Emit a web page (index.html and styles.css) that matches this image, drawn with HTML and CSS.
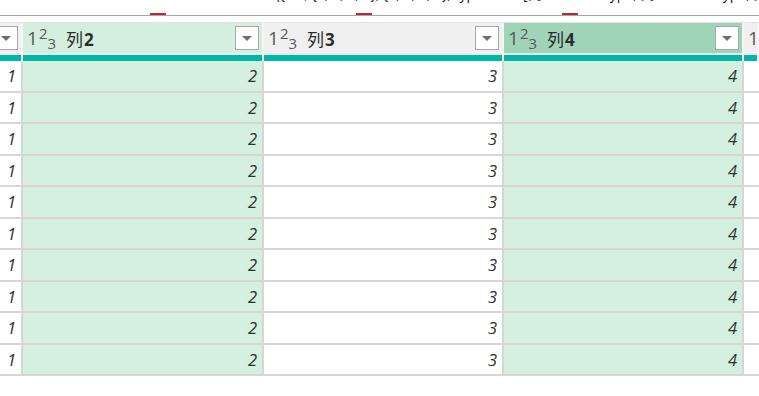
FILE: index.html
```html
<!DOCTYPE html>
<html>
<head>
    <title>查询编辑器</title>
    <link rel="stylesheet" href="styles.css">
</head>
<body>
    <div class="formula">
        <div class="code">= Table.FromRows({<span class="str">"1",</span> {1, 2, 3, 4}, {1, 2, 3, 4}, type table [<span class="str">列1</span> = Int64.Type, <span class="str">列2</span> = Int64.Type, <span class="str">列3</span>, <span class="str">列4</span>]})</div>
        <div class="marks">
            <span class="mark m1"></span>
            <span class="mark m2"></span>
            <span class="mark m3"></span>
        </div>
    </div>

    <div class="grid">
        <div class="row head">
            <div class="hcell plain"><div class="hin"><span class="drop"></span></div><div class="strip"></div></div>
            <div class="hcell mint">
                <div class="hin">
                    <span class="type">1<sup>2</sup><sub>3</sub></span>
                    <span class="name">列<b>2</b></span>
                    <span class="drop"></span>
                </div>
                <div class="strip"></div>
            </div>
            <div class="hcell plain">
                <div class="hin">
                    <span class="type">1<sup>2</sup><sub>3</sub></span>
                    <span class="name">列<b>3</b></span>
                    <span class="drop"></span>
                </div>
                <div class="strip"></div>
            </div>
            <div class="hcell picked">
                <div class="hin">
                    <span class="type">1<sup>2</sup><sub>3</sub></span>
                    <span class="name">列<b>4</b></span>
                    <span class="drop"></span>
                </div>
                <div class="strip"></div>
            </div>
            <div class="hcell plain"><div class="hin"><span class="type">1<sup>2</sup><sub>3</sub></span></div><div class="strip"></div></div>
        </div>

        <div class="row"><div class="cell">1</div><div class="cell mint">2</div><div class="cell">3</div><div class="cell mint">4</div><div class="cell"></div></div>
        <div class="row"><div class="cell">1</div><div class="cell mint">2</div><div class="cell">3</div><div class="cell mint">4</div><div class="cell"></div></div>
        <div class="row"><div class="cell">1</div><div class="cell mint">2</div><div class="cell">3</div><div class="cell mint">4</div><div class="cell"></div></div>
        <div class="row"><div class="cell">1</div><div class="cell mint">2</div><div class="cell">3</div><div class="cell mint">4</div><div class="cell"></div></div>
        <div class="row"><div class="cell">1</div><div class="cell mint">2</div><div class="cell">3</div><div class="cell mint">4</div><div class="cell"></div></div>
        <div class="row"><div class="cell">1</div><div class="cell mint">2</div><div class="cell">3</div><div class="cell mint">4</div><div class="cell"></div></div>
        <div class="row"><div class="cell">1</div><div class="cell mint">2</div><div class="cell">3</div><div class="cell mint">4</div><div class="cell"></div></div>
        <div class="row"><div class="cell">1</div><div class="cell mint">2</div><div class="cell">3</div><div class="cell mint">4</div><div class="cell"></div></div>
        <div class="row"><div class="cell">1</div><div class="cell mint">2</div><div class="cell">3</div><div class="cell mint">4</div><div class="cell"></div></div>
        <div class="row"><div class="cell">1</div><div class="cell mint">2</div><div class="cell">3</div><div class="cell mint">4</div><div class="cell"></div></div>
    </div>
</body>
</html>
```

FILE: styles.css
```css
* {
    margin: 0;
    padding: 0;
    box-sizing: border-box;
}

body {
    background: #fff;
    font-family: 'Open Sans', 'Noto Sans CJK SC', sans-serif;
    color: #333;
    overflow: hidden;
}

/* formula bar, scrolled so only the bottom of the line shows */
.formula {
    height: 16px;
    border-bottom: 1px solid #a6a6a6;
    overflow: hidden;
    margin-bottom: 6px;
}

.code {
    margin-top: -14px;
    padding-left: 156px;
    height: 16px;
    line-height: 16px;
    font-size: 14px;
    white-space: nowrap;
    color: #111;
}

.code .str {
    color: #b31515;
}

.marks {
    display: flex;
    margin-top: 11px;
    height: 2px;
}

.mark {
    display: block;
    width: 16px;
    height: 2px;
    background: #c0272d;
}

.m1 { margin-left: 150px; }
.m2 { margin-left: 190px; }
.m3 { margin-left: 190px; }

/* grid */
.row {
    display: grid;
    grid-template-columns: 23px 241px 240px 240px 1fr;
}

.head {
    border-top: 1px solid #e2e2e2;
}

.hcell {
    border-right: 2px solid #f6f6f6;
    overflow: hidden;
}

.hin {
    height: 32px;
    display: flex;
    align-items: center;
    padding-left: 4px;
    border-bottom: 2px solid #ececec;
    white-space: nowrap;
}

.hcell.plain .hin { background: #f0f0f0; }
.hcell.mint .hin { background: #d4efdf; }
.hcell.picked .hin { background: #9fd4b9; }

.hcell:first-child .hin {
    padding-left: 0;
    justify-content: flex-end;
}

.strip {
    height: 6px;
    background: #00b6a7;
}

.type {
    color: #595959;
    font-size: 19px;
    line-height: 1;
    display: inline-flex;
    align-items: center;
}

.type sup {
    font-size: 15px;
    position: relative;
    top: -5px;
    vertical-align: baseline;
    margin-left: 1px;
}

.type sub {
    font-size: 15px;
    position: relative;
    top: 5px;
    vertical-align: baseline;
}

.name {
    margin-left: 10px;
    font-size: 17px;
    color: #2b2b2b;
    font-family: 'Noto Sans CJK SC', sans-serif;
}

.name b {
    font-family: 'Open Sans', sans-serif;
    font-weight: 700;
    font-size: 17px;
    margin-left: 1px;
}

.drop {
    margin-left: auto;
    margin-right: 3px;
    width: 24px;
    height: 24px;
    flex: none;
    background: #fff;
    border: 1px solid #a9a9a9;
    display: flex;
    align-items: center;
    justify-content: center;
}

.drop::after {
    content: '';
    border-top: 5px solid #6e6e6e;
    border-left: 5px solid transparent;
    border-right: 5px solid transparent;
}

/* body cells */
.cell {
    height: 31.5px;
    border-right: 2px solid #d6d6d6;
    border-bottom: 2px solid #d6d6d6;
    text-align: right;
    padding-right: 5px;
    font-size: 16.5px;
    font-style: italic;
    line-height: 29px;
    color: #2f2f2f;
}

.cell:last-child {
    border-right: none;
}

.cell.mint {
    background: #d5efe0;
}
```
